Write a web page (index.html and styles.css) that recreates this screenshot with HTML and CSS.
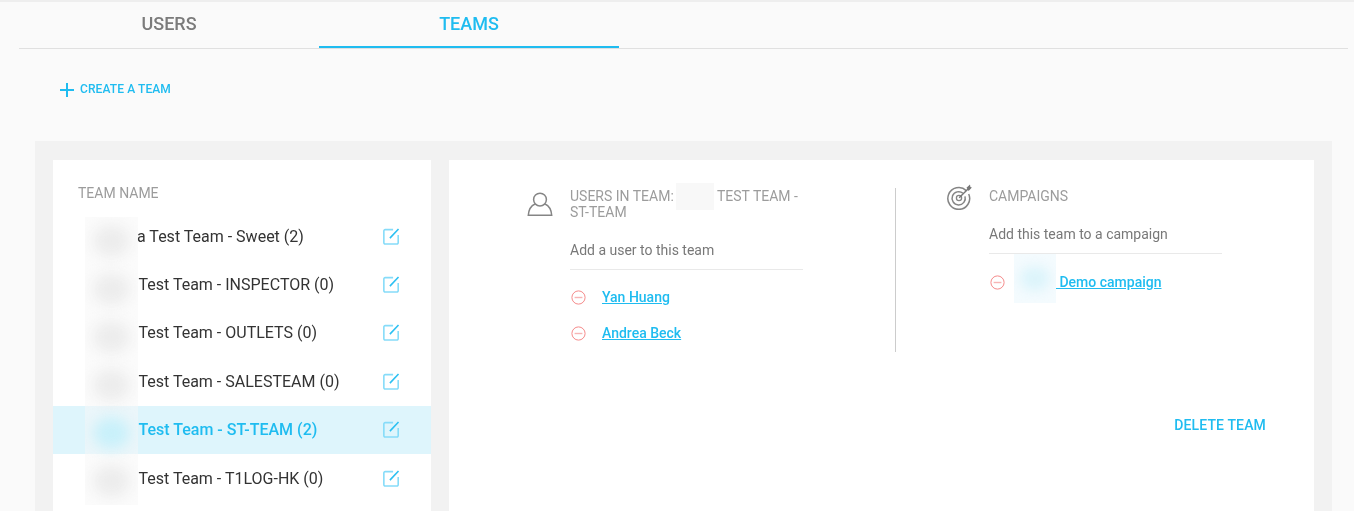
FILE: index.html
```html
<!DOCTYPE html>
<html lang="en">
<head>
<meta charset="utf-8">
<title>Teams</title>
<link rel="stylesheet" href="styles.css">
</head>
<body>
<svg class="sprites" width="0" height="0" aria-hidden="true">
  <symbol id="edit" viewBox="0 0 16 16">
    <path d="M9.5 1.5H2a1.2 1.2 0 0 0-1.2 1.2v11.1A1.2 1.2 0 0 0 2 15h11.1a1.2 1.2 0 0 0 1.2-1.2V6.5" fill="none" stroke="#86dcf9" stroke-width="1.5"/>
    <path d="M6.5 9.5 14.600 1" fill="none" stroke="#2cc0f2" stroke-width="1.5"/>
  </symbol>
  <symbol id="minus" viewBox="0 0 15 15">
    <circle cx="7.5" cy="7.5" r="6.6" fill="none" stroke="#f58b8b" stroke-width="1"/>
    <path d="M3.6 7.5h7.8" stroke="#f7b5b5" stroke-width="1.4"/>
  </symbol>
</svg>
<main class="page">
  <nav class="tabs">
    <a class="tab">USERS</a>
    <a class="tab tab-active">TEAMS</a>
  </nav>
  <a class="create">
    <svg class="plus" width="14" height="14" viewBox="0 0 14 14"><path d="M7 0v14M0 7h14" stroke="#1fbcf0" stroke-width="2"/></svg>
    <span>CREATE A TEAM</span>
  </a>
  <section class="panel">
    <div class="list-card">
      <h2 class="list-title">TEAM NAME</h2>
      <ul class="rows">
        <li class="row row-first"><span>a Test Team - Sweet (2)</span><svg class="edit"><use href="#edit"/></svg></li>
        <li class="row"><span>Test Team - INSPECTOR (0)</span><svg class="edit"><use href="#edit"/></svg></li>
        <li class="row"><span>Test Team - OUTLETS (0)</span><svg class="edit"><use href="#edit"/></svg></li>
        <li class="row"><span>Test Team - SALESTEAM (0)</span><svg class="edit"><use href="#edit"/></svg></li>
        <li class="row row-active"><span>Test Team - ST-TEAM (2)</span><svg class="edit"><use href="#edit"/></svg></li>
        <li class="row"><span>Test Team - T1LOG-HK (0)</span><svg class="edit"><use href="#edit"/></svg></li>
      </ul>
      <div class="redact-col" aria-hidden="true">
        <i class="blob"></i><i class="blob"></i><i class="blob"></i><i class="blob"></i><i class="blob blob-blue"></i><i class="blob"></i>
      </div>
    </div>
    <div class="detail-card">
      <div class="columns">
        <div class="col col-users">
          <svg class="col-icon" width="26" height="26" viewBox="0 0 26 26">
            <circle cx="13" cy="8.6" r="6.4" fill="none" stroke="#858585" stroke-width="1.5"/>
            <path d="M8 13C4.500 14.500 1.800 18 1.300 24.300H24.700C24.200 18 21.500 14.500 18 13" fill="none" stroke="#858585" stroke-width="1.5"/>
          </svg>
          <div class="col-body">
            <h3 class="col-title">USERS IN TEAM: <span class="gap-name"></span> TEST TEAM -<br>ST-TEAM</h3>
            <p class="col-add">Add a user to this team</p>
            <ul class="members">
              <li class="member"><svg class="minus"><use href="#minus"/></svg><a class="link">Yan Huang</a></li>
              <li class="member"><svg class="minus"><use href="#minus"/></svg><a class="link">Andrea Beck</a></li>
            </ul>
          </div>
        </div>
        <div class="col col-camps">
          <svg class="col-icon" width="26" height="26" viewBox="0 0 26 26">
            <path d="M20.300 6.600A10.900 10.900 0 1 0 22.700 10" fill="none" stroke="#858585" stroke-width="1.500"/>
            <path d="M17 9.300A6.600 6.600 0 1 0 19 12.400" fill="none" stroke="#858585" stroke-width="1.500"/>
            <circle cx="13" cy="14" r="2.600" fill="none" stroke="#858585" stroke-width="1.300"/>
            <path d="M13.200 13.800 22 5" stroke="#777" stroke-width="1.400"/>
            <path d="M20.500 3.800 24 .6l.4 2.400 1.500.6-3.300 3.300z" fill="#777"/>
          </svg>
          <div class="col-body">
            <h3 class="col-title">CAMPAIGNS</h3>
            <p class="col-add">Add this team to a campaign</p>
            <div class="campaign">
              <svg class="minus"><use href="#minus"/></svg>
              <a class="link link-camp">&nbsp;Demo campaign</a>
              <span class="camp-redact" aria-hidden="true"><i></i></span>
            </div>
          </div>
        </div>
      </div>
      <div class="actions"><a class="delete">DELETE TEAM</a></div>
    </div>
  </section>
</main>
</body>
</html>
```
FILE: styles.css
```css
* { box-sizing: border-box; }
html, body { margin: 0; height: 511px; overflow: hidden; }
body { background: #fafafa; font-family: Roboto, "Liberation Sans", sans-serif; color: #333; }
.sprites { position: absolute; }
ul { list-style: none; margin: 0; padding: 0; }
h2, h3, p { margin: 0; font-weight: 400; }
.page { height: 511px; display: flex; flex-direction: column; border-top: 2px solid #eeeeee; will-change: transform; }
.tabs { display: flex; margin: 0 6px 0 19px; height: 47px; border-bottom: 1px solid #e0e0e0; }
.tab { width: 300px; height: 46px; padding-top: 12px; text-align: center; font-size: 18px; line-height: 20px; font-weight: 500; color: #7b7b7b; }
.tab-active { color: #1fbcf0; border-bottom: 2px solid #1fbcf0; }
.create { display: flex; align-items: center; gap: 6px; margin: 34px 0 0 60px; height: 14px; font-size: 12px; line-height: 12px; font-weight: 500; letter-spacing: .1px; color: #1fbcf0; }
.create span { margin-top: -2px; }
.panel { flex: 1; display: flex; gap: 18px; margin: 44px 22px 0 35px; padding: 19px 18px 0; background: #f2f2f2; min-height: 0; }
.list-card { position: relative; width: 378px; background: #fff; overflow: hidden; }
.list-title { padding: 25px 0 0 25px; font-size: 14px; line-height: 16px; font-weight: 400; color: #9c9c9c; }
.rows { margin-top: 11px; }
.row { display: flex; align-items: center; justify-content: space-between; height: 48.4px; padding: 0 31px 0 85.500px; font-size: 16px; color: #333; }
.row-first { padding-left: 84px; }
.row-active { background: #def5fc; color: #1fbcf0; font-weight: 500; }
.edit { width: 17px; height: 17px; }
.redact-col { position: absolute; left: 32px; top: 57px; width: 53px; height: 288px; overflow: hidden; display: flex; flex-direction: column; gap: 16px; padding: 8px 8px; background: rgba(248, 248, 248, .5); }
.blob { display: block; flex: none; height: 32px; background: #ececec; border-radius: 50%; filter: blur(7px); }
.blob-blue { background: #c8f0fa; }
.detail-card { flex: 1; background: #fff; display: flex; flex-direction: column; }
.columns { display: flex; padding: 28px 0 0 78px; height: 192px; }
.col { display: flex; height: 164px; }
.col-users { width: 368px; gap: 17px; }
.col-camps { border-left: 1px solid #cccccc; padding-left: 50px; gap: 17px; }
.col-camps .col-icon { margin-top: -4px; }
.col-users .col-icon { margin-top: 3px; }
.col-icon { flex: none; }
.col-body { width: 233px; }
.col-title { font-size: 14px; line-height: 16px; font-weight: 400; color: #9c9c9c; white-space: nowrap; }
.gap-name { position: relative; display: inline-block; width: 36.500px; height: 16px; vertical-align: top; }
.gap-name::before { content: ""; position: absolute; left: -1px; right: 0; top: -5px; height: 27px; background: #f8f8f8; }
.col-add { margin-top: 21px; padding-bottom: 10px; font-size: 14px; line-height: 18px; color: #787878; border-bottom: 1px solid #e9e9e9; }
.members { margin-top: 9px; }
.member { display: flex; align-items: center; height: 36px; }
.minus { width: 15px; height: 15px; margin-left: 1px; flex: none; }
.member .link { margin-left: 16px; }
.link { font-size: 14px; font-weight: 500; color: #1fbcf0; text-decoration: underline; }
.campaign { position: relative; display: flex; align-items: center; height: 56px; }
.link-camp { margin-left: 51px; }
.camp-redact { position: absolute; left: 25px; top: 0; width: 42px; height: 49px; background: #f4fbfe; overflow: hidden; }
.camp-redact i { position: absolute; inset: 12px 6px; background: #dcf4fb; border-radius: 50%; filter: blur(6px); }
.actions { display: flex; justify-content: flex-end; padding: 64px 48px 0 0; }
.delete { font-size: 14px; line-height: 18px; font-weight: 500; letter-spacing: .15px; color: #1fbcf0; }
```
